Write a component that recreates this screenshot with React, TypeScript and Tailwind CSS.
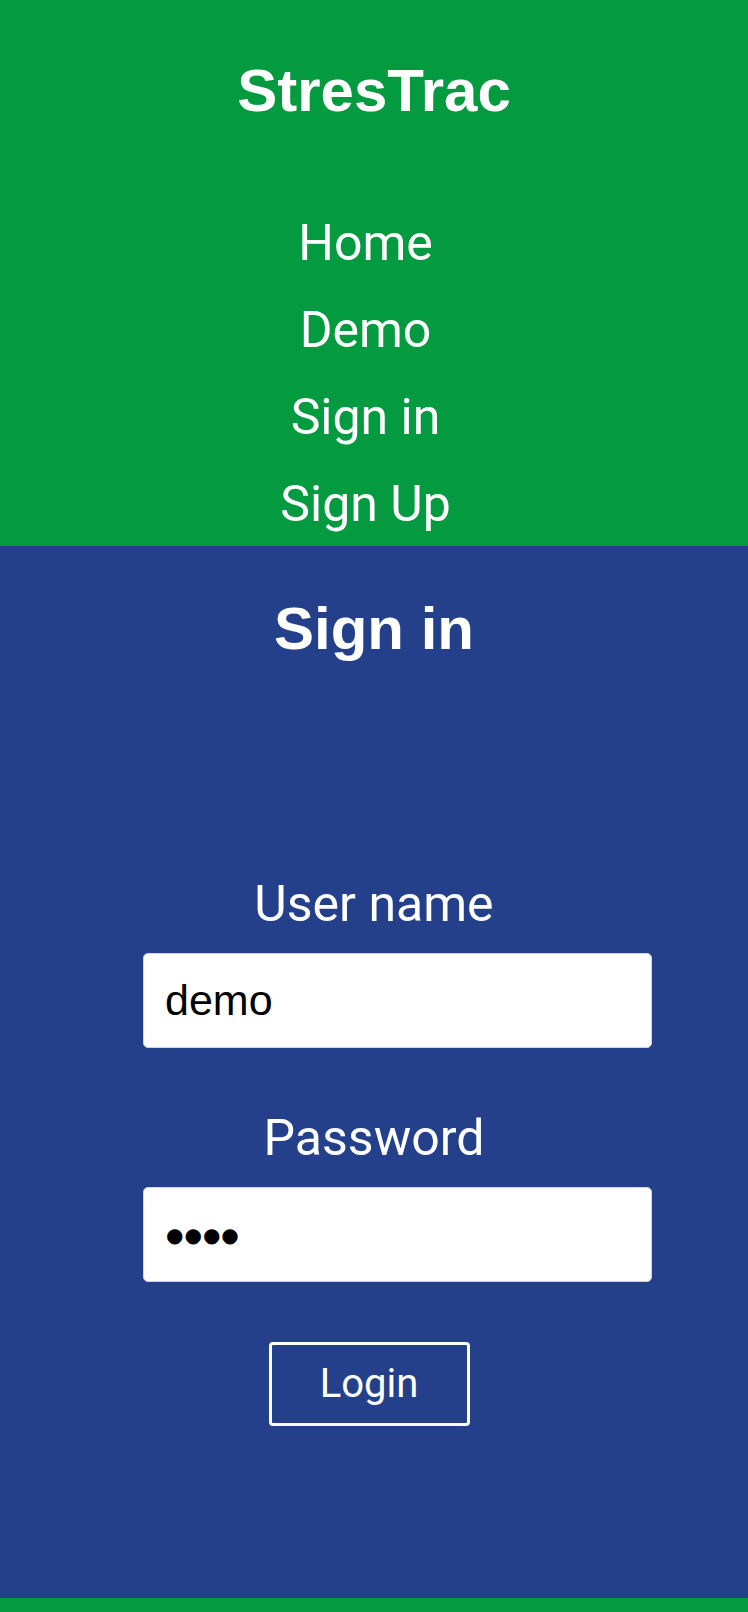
import React from "react";

export default function App() {
  return (
    <div className="w-[748px] min-h-[1612px] bg-[#24408a] overflow-hidden">
      <header className="h-[546px] bg-[#049b40] flex flex-col items-center overflow-hidden">
        <h1 className="mt-[61px] text-[60px] leading-[60px] font-bold text-white font-['Liberation_Sans',Arial,sans-serif]">
          StresTrac
        </h1>
        <nav className="mt-[79px] w-full pr-[17px]">
          <ul className="flex flex-col items-center text-white text-[50px] leading-[87px] font-['Roboto',sans-serif]">
            <li>Home</li>
            <li>Demo</li>
            <li>Sign in</li>
            <li>Sign Up</li>
          </ul>
        </nav>
      </header>
      <main className="h-[1052px] bg-[#24408a] flex flex-col items-center">
        <h2 className="mt-[53px] text-[60px] leading-[60px] font-bold text-white font-['Liberation_Sans',Arial,sans-serif]">
          Sign in
        </h2>
        <form className="w-full flex flex-col items-center mt-[220px]">
          <label className="text-white text-[50px] leading-[50px] font-['Roboto',sans-serif]">User name</label>
          <input
            readOnly
            value="demo"
            className="mt-[24px] ml-[47px] w-[509px] h-[95px] bg-white rounded-[5px] border border-[#cfd4dc] px-[21px] text-[43px] text-black font-['Liberation_Sans',Arial,sans-serif] outline-none"
          />
          <label className="mt-[65px] text-white text-[50px] leading-[50px] font-['Roboto',sans-serif]">Password</label>
          <input
            readOnly
            value="●●●●"
            className="mt-[24px] ml-[47px] w-[509px] h-[95px] bg-white rounded-[5px] border border-[#cfd4dc] px-[22px] text-[20px] tracking-[1px] text-black font-['DejaVu_Sans',sans-serif] outline-none"
          />
          <button
            type="button"
            className="mt-[60px] mr-[10px] w-[201px] h-[84px] border-[3px] border-white rounded-[4px] text-white text-[40px] leading-none font-['Roboto',sans-serif]"
          >
            Login
          </button>
        </form>
      </main>
      <footer className="h-[60px] bg-[#049b40]" />
    </div>
  );
}
